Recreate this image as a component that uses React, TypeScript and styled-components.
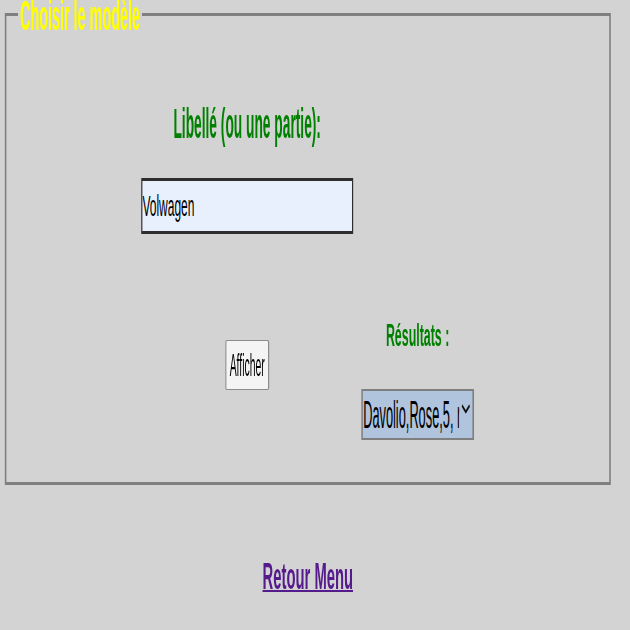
import React from 'react';
import styled, { createGlobalStyle } from 'styled-components';

// The reference is a wide page squeezed into 630px: lay it out wide, then scale X.
const GlobalStyle = createGlobalStyle`
  html, body {
    margin: 0;
    padding: 0;
    background: #d3d3d3;
    overflow: hidden;
  }
  body {
    font-family: "Liberation Sans", Arial, sans-serif;
  }
`;

const Page = styled.div`
  width: 1575px;
  height: 630px;
  transform: scaleX(0.4);
  transform-origin: 0 0;
`;

const Frame = styled.fieldset`
  margin: 0 48px 0 12px;
  padding: 71px 0 42px 30px;
  border-style: solid;
  border-color: #7f7f7f;
  border-width: 3px 4px;
  min-width: 0;
`;

const Legend = styled.legend`
  padding: 0 4px;
  font-weight: bold;
  font-size: 36px;
  line-height: 28px;
  color: #ffff00;
`;

// narrow lettering: stretched taller, layout width unchanged
const Tall = styled.span<{ $k: number; $dy?: number }>`
  display: inline-block;
  transform: translateY(${p => p.$dy || 0}px) scaleY(${p => p.$k});
`;

const Columns = styled.div`
  display: flex;
  gap: 20px;
  margin-left: 307px;
`;

const Column = styled.div<{ width: number; offset?: number }>`
  width: ${p => p.width}px;
  margin-top: ${p => p.offset || 0}px;
  display: flex;
  flex-direction: column;
  align-items: center;
`;

const FieldLabel = styled.div`
  font-weight: bold;
  font-size: 34.4px;
  line-height: 48px;
  color: #008000;
`;

const ResultsLabel = styled.div`
  font-weight: bold;
  font-size: 31px;
  line-height: 36px;
  color: #008000;
`;

const TextInput = styled.input`
  box-sizing: border-box;
  margin-top: 31px;
  width: 530px;
  height: 56px;
  padding: 0;
  border-style: solid;
  border-color: #2e2e2e;
  border-width: 3px;
  background: #e8f0fe;
  font-family: "Liberation Sans", Arial, sans-serif;
  font-size: 30px;
  color: #000;
  outline: none;
`;

const ShowButton = styled.button`
  box-sizing: border-box;
  margin-top: 106px;
  width: 110px;
  height: 50px;
  padding: 0;
  border-style: solid;
  border-color: #8c8c8c;
  border-width: 1px 3px;
  border-radius: 4px / 3px;
  background: #f4f4f4;
  font-family: "Liberation Sans", Arial, sans-serif;
  font-size: 26px;
  color: #000;
`;

const SelectWrap = styled.div`
  position: relative;
  margin-top: 35px;
  width: 282px;
  height: 51px;
`;

const ResultSelect = styled.select`
  box-sizing: border-box;
  appearance: none;
  width: 344px;
  height: 51px;
  margin: 0;
  padding: 0 40px 0 1px;
  border-style: solid;
  border-color: #7f7f7f;
  border-width: 2px 5px;
  border-radius: 0;
  background: #b0c4de;
  font-family: "Liberation Sans", Arial, sans-serif;
  font-size: 39px;
  color: #000;
  transform: scaleX(0.82);
  transform-origin: 0 0;
`;

const Chevron = styled.svg`
  position: absolute;
  left: 250px;
  top: 15px;
  pointer-events: none;
`;

const Footer = styled.div`
  margin: 71px 48px 0 12px;
  text-align: center;
`;

const MenuLink = styled.a`
  font-weight: bold;
  font-size: 37px;
  line-height: 42px;
  color: #551a8b;
  text-decoration: underline;
  text-decoration-thickness: 2px;
`;

const App: React.FC = () => {
  return (
    <>
      <GlobalStyle />
      <Page>
        <Frame>
          <Legend>
            <Tall $k={1.19} $dy={2}>Choisir le modèle</Tall>
          </Legend>
          <Columns>
            <Column width={530}>
              <FieldLabel>
                <Tall $k={1.22}>Libellé (ou une partie):</Tall>
              </FieldLabel>
              <TextInput type="text" defaultValue="Volwagen" />
              <ShowButton type="button">
                <Tall $k={1.23}>Afficher</Tall>
              </ShowButton>
            </Column>
            <Column width={282} offset={219}>
              <ResultsLabel>Résultats :</ResultsLabel>
              <SelectWrap>
                <ResultSelect defaultValue="1">
                  <option value="1">Davolio,Rose,5, rue des Lilas</option>
                </ResultSelect>
                <Chevron width="23" height="10" viewBox="0 0 23 10">
                  <polyline points="2,1.5 11.5,8 21,1.5" fill="none" stroke="#111" strokeWidth="3" />
                </Chevron>
              </SelectWrap>
            </Column>
          </Columns>
        </Frame>
        <Footer>
          <MenuLink href="#">Retour Menu</MenuLink>
        </Footer>
      </Page>
    </>
  );
};

export default App;
